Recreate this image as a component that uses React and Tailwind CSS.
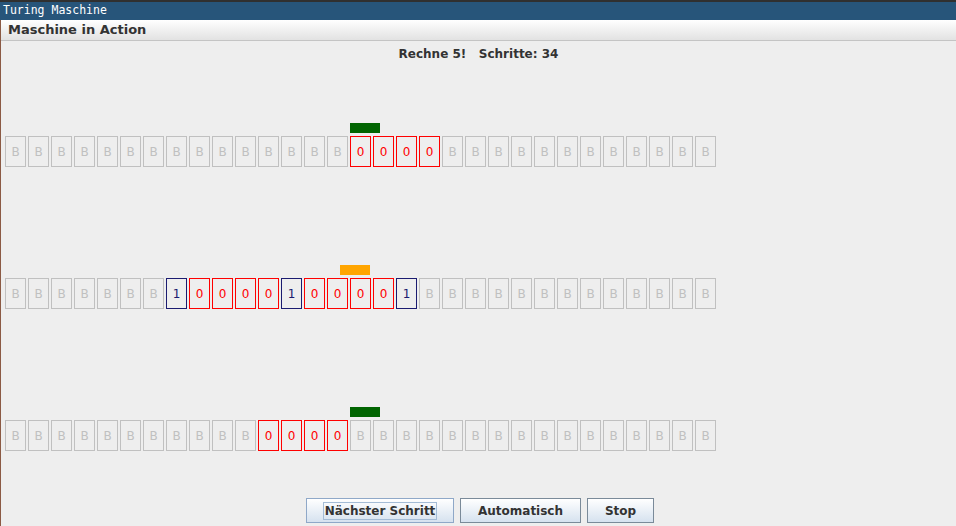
import React from 'react';

const CELLS = 31;

// tape contents: index -> symbol, everything else is blank
const tapes = [
  { symbols: { 15: '0', 16: '0', 17: '0', 18: '0' }, head: 'left-[349px]', headColor: 'bg-[#006400]' },
  {
    symbols: { 7: '1', 8: '0', 9: '0', 10: '0', 11: '0', 12: '1', 13: '0', 14: '0', 15: '0', 16: '0', 17: '1' },
    head: 'left-[339px]',
    headColor: 'bg-[#ffa500]',
  },
  { symbols: { 11: '0', 12: '0', 13: '0', 14: '0' }, head: 'left-[349px]', headColor: 'bg-[#006400]' },
];

const cellStyle = (s) => {
  if (s === '0') return 'border-[#ff0000] text-[#ff0000]';
  if (s === '1') return 'border-[#1b1b70] text-[#1b1b70]';
  return 'border-[#c0c0c0] text-[#c0c0c0]';
};

const Tape = ({ tape }) => (
  <div className="relative h-[44px]">
    <div className={`absolute top-0 h-[10px] w-[30px] ${tape.head} ${tape.headColor}`} />
    <div className="flex gap-[2px] pl-[4px] pt-[13px]">
      {Array.from({ length: CELLS }).map((_, i) => {
        const s = tape.symbols[i] || 'B';
        return (
          <div
            key={i}
            className={`w-[21px] h-[31px] border flex items-center justify-center text-[12px] ${cellStyle(s)}`}
          >
            {s}
          </div>
        );
      })}
    </div>
  </div>
);

const App = () => {
  return (
    <div
      className="w-[956px] h-[526px] overflow-hidden bg-[#eeeeee] flex flex-col"
      style={{ fontFamily: '"DejaVu Sans", sans-serif' }}
    >
      {/* Window title */}
      <div className="h-[20px] border-t-2 border-[#303030] bg-[#27557a] text-white text-[11.5px] leading-[17px] pl-[3px] font-['DejaVu_Sans_Mono',monospace]">
        Turing Maschine
      </div>

      <div className="flex-1 flex flex-col border-l border-[#8b5a44]">
        {/* Panel header */}
        <div className="h-[21px] bg-gradient-to-b from-white to-[#e2e2e2] border-b border-[#c4c4c4] font-bold text-[13px] text-[#333333] leading-[19px] pl-[7px]">
          Maschine in Action
        </div>

        <div className="mt-[4px] h-[18px] text-center font-bold text-[12px] text-[#333333] leading-[18px] whitespace-pre">
          Rechne 5!   Schritte: 34
        </div>

        {/* Tapes */}
        <div className="mt-[60px] flex flex-col gap-[98px]">
          {tapes.map((t, i) => (
            <Tape key={i} tape={t} />
          ))}
        </div>

        {/* Buttons */}
        <div className="mt-[47px] flex justify-center gap-[6px] pl-[3px] font-bold text-[12px] text-[#333333]">
          <button className="h-[25px] w-[148px] border border-[#8fa8c8] bg-gradient-to-b from-white to-[#d6e2ef] flex items-center justify-center">
            <span className="border border-[#a4bcd6] px-[1px] leading-[16px]">Nächster Schritt</span>
          </button>
          <button className="h-[25px] w-[121px] border border-[#7a8a99] bg-gradient-to-b from-white to-[#d6e2ef]">
            Automatisch
          </button>
          <button className="h-[25px] w-[67px] border border-[#7a8a99] bg-gradient-to-b from-white to-[#d6e2ef]">
            Stop
          </button>
        </div>
      </div>
    </div>
  );
};

export default App;
